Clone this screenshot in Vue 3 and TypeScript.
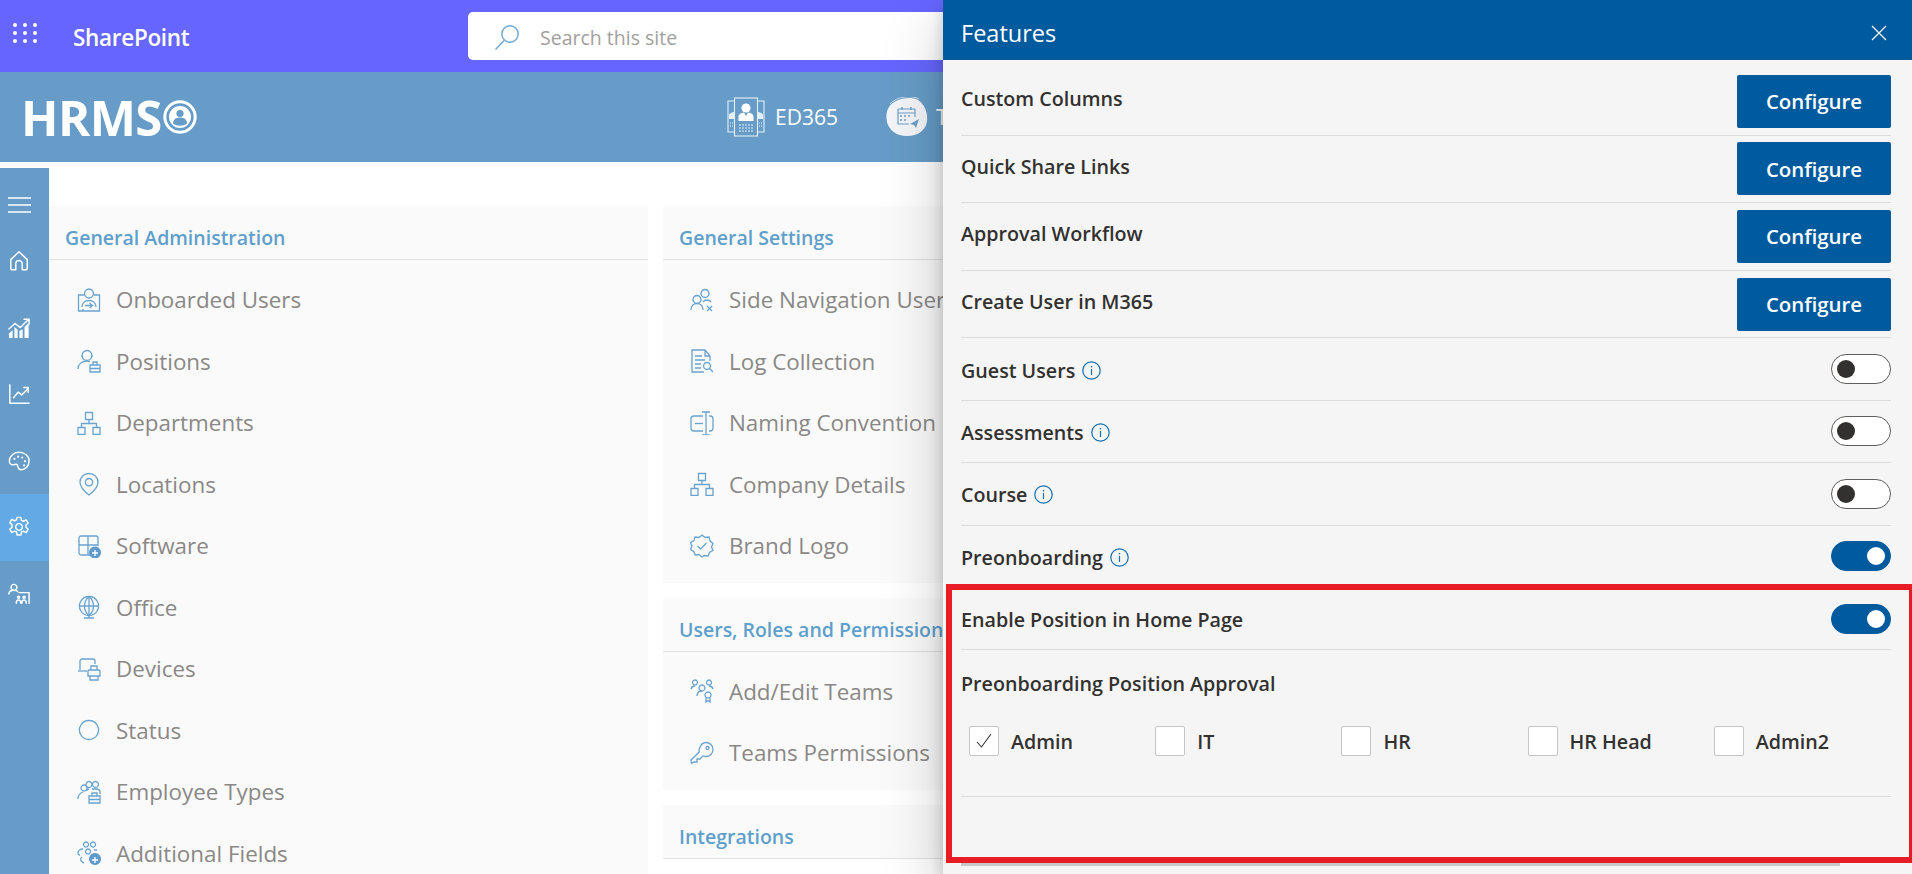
<template>
  <div class="page">
    <header class="topbar">
      <svg class="waffle" viewBox="0 0 24 20" width="24" height="20">
        <template v-for="y in [2, 10, 18]" :key="y">
          <circle v-for="x in [2, 12, 22]" :key="x" :cx="x" :cy="y" r="2" fill="#fff" />
        </template>
      </svg>
      <span class="product">SharePoint</span>
      <div class="search">
        <svg class="search-icon" viewBox="0 0 26 26" width="26" height="26" fill="none" stroke="#6ba6d8" stroke-width="1.4">
          <circle cx="16" cy="10" r="8.2" />
          <path d="M10 16.5 1.5 25.5" />
        </svg>
        <span>Search this site</span>
      </div>
    </header>

    <div class="brandbar">
      <div class="logo">
        <span class="logo-text">HRMS</span>
        <svg viewBox="0 0 34 34" width="34" height="34">
          <circle cx="17" cy="17" r="15.2" fill="none" stroke="#fff" stroke-width="3" />
          <circle cx="17" cy="17" r="11" fill="#fff" />
          <circle cx="17" cy="13.5" r="3.6" fill="#669cc7" />
          <path d="M10 23.5c0-4 3-6 7-6s7 2 7 6c-2 1.6-4.4 2.2-7 2.2s-5-.6-7-2.2z" fill="#669cc7" />
        </svg>
      </div>
      <div class="brand-link first">
        <svg viewBox="0 0 38 40" width="38" height="40" fill="none" stroke="#e4f0f8" stroke-width="1.1">
          <path d="M7 4H1v31h6M31 4h6v31h-6" />
          <rect x="7.5" y="1" width="23" height="38" />
          <circle cx="19" cy="11" r="4.6" fill="#fff" stroke="none" />
          <path d="M11.5 24v-4c0-3 3-3.8 5.5-4.4l2 3.4 2-3.4c2.5.6 5.5 1.4 5.5 4.4v4z" fill="#fff" stroke="none" />
          <path d="M2 22v-4c0-1.5 2-2.5 5-3v7zM36 22v-4c0-1.5-2-2.5-5-3v7z" fill="#e4f0f8" stroke="none" />
          <path d="M12 28h14M12 31h14M12 34h14" stroke-dasharray="2 1" />
          <path d="M3 26h3M3 29h3M32 26h3M32 29h3" stroke-dasharray="1 1" />
        </svg>
        <span>ED365</span>
      </div>
      <div class="brand-link second">
        <svg viewBox="0 0 44 40" width="44" height="40">
          <path d="M4 10C10 1 26-1 33 3c6 4 10 12 9 21-1 9-9 15-20 15C11 39 4 33 2 25 1 19 1 15 4 10z" fill="#f3f5f8" />
          <path d="M5 7C12-1 27-2 34 2" fill="none" stroke="#dfe8f0" stroke-width=".8" />
          <path d="M13 12h17v8M13 12v15h11M13 16h17" fill="none" stroke="#6d9fc9" stroke-width="1.2" />
          <path d="M17 10v3M26 10v3M15 19h2M19 19h2M23 19h2M15 23h2M19 23h2" stroke="#6d9fc9" stroke-width="1.4" fill="none" />
          <path d="M25 27l9-5-3 9-2-3z" fill="#6d9fc9" />
        </svg>
        <span>Travel</span>
      </div>
    </div>

    <div class="main">
      <nav class="rail">
        <svg class="hamburger" viewBox="0 0 23 16" width="23" height="16" stroke="#fff" stroke-width="1.5">
          <path d="M0 1h23M0 8h23M0 15h23" />
        </svg>
        <div v-for="item in railItems" :key="item.name" class="rail-item" :class="{ active: item.active }">
          <svg viewBox="0 0 24 24" width="22" height="22" fill="none" stroke="#fff" stroke-width="1.6" stroke-linecap="round" stroke-linejoin="round">
            <path v-for="d in item.lines" :key="d" :d="d" />
            <path v-for="d in item.fills ?? []" :key="d" :d="d" fill="#fff" stroke="none" />
          </svg>
        </div>
      </nav>

      <div class="content">
        <div class="column">
          <section class="card">
            <h3>General Administration</h3>
            <ul>
              <li v-for="item in generalAdmin" :key="item.label">
                <svg viewBox="0 0 24 24" width="24" height="24" fill="none" stroke="#69a3d0" stroke-width="1.3">
                  <path v-for="d in item.lines" :key="d" :d="d" />
                  <path v-for="d in item.fills ?? []" :key="d" :d="d" fill="#5e9bcb" stroke="none" />
                  <path v-if="item.plus" d="M18 16v6M15 19h6" stroke="#fff" />
                </svg>
                <span>{{ item.label }}</span>
              </li>
            </ul>
          </section>
        </div>
        <div class="column second-col">
          <section v-for="card in rightCards" :key="card.title" class="card">
            <h3>{{ card.title }}</h3>
            <ul v-if="card.items.length">
              <li v-for="item in card.items" :key="item.label">
                <svg viewBox="0 0 24 24" width="24" height="24" fill="none" stroke="#69a3d0" stroke-width="1.3">
                  <path v-for="d in item.lines" :key="d" :d="d" />
                </svg>
                <span>{{ item.label }}</span>
              </li>
            </ul>
          </section>
        </div>
      </div>
    </div>

    <aside class="panel">
      <div class="panel-head">
        <span>Features</span>
        <svg viewBox="0 0 16 16" width="16" height="16" stroke="#fff" stroke-width="1.2">
          <path d="M1 1l14 14M15 1L1 15" />
        </svg>
      </div>
      <div class="panel-body">
        <div v-for="name in configRows" :key="name" class="row config-row">
          <span class="label">{{ name }}</span>
          <button class="configure">Configure</button>
        </div>
        <div v-for="row in toggleRows" :key="row.name" class="row toggle-row">
          <span class="label">
            {{ row.name }}
            <svg v-if="row.info" class="info" viewBox="0 0 19 19" width="19" height="19" fill="none" stroke="#0f6cb0" stroke-width="1.2">
              <circle cx="9.5" cy="9.5" r="8.7" />
              <path d="M9.5 8v6" />
              <path d="M9.5 5v1.4" stroke-width="1.4" />
            </svg>
          </span>
          <div class="toggle" :class="{ on: row.on }"><i></i></div>
        </div>
        <div class="approval">
          <div class="label approval-title">Preonboarding Position Approval</div>
          <div class="checks">
            <div v-for="check in approvals" :key="check.name" class="check">
              <div class="box">
                <svg v-if="check.checked" viewBox="0 0 18 18" width="18" height="18" fill="none" stroke="#323130" stroke-width="1.1">
                  <path d="M2 10l4.5 5L16 2" />
                </svg>
              </div>
              <span class="label">{{ check.name }}</span>
            </div>
          </div>
        </div>
      </div>
      <div class="thumb"></div>
      <div class="highlight"></div>
    </aside>
  </div>
</template>

<script setup lang="ts">
interface IconItem {
  label: string
  lines: string[]
  fills?: string[]
  plus?: boolean
}

interface RailItem {
  name: string
  lines: string[]
  fills?: string[]
  active?: boolean
}

const treeIcon = [
  'M8.5 1.5h7v7h-7zM1 16.5h7v7H1zM16 16.5h7v7h-7z',
  'M12 8.5v4M4.5 16.5v-4h15v4',
]

const railItems: RailItem[] = [
  { name: 'home', lines: ['M3 10.5 12 2l9 8.5v9a2 2 0 0 1-2 2h-3.5V15a3.5 3.5 0 0 0-7 0v6.5H5a2 2 0 0 1-2-2z'] },
  {
    name: 'reports',
    lines: ['M1 13l6.5-6 6 4.5L22 3M17.5 2.5H23V8'],
    fills: ['M1 23v-5l4-3.5V23zM7 23V11l3.5 2.5V23zM12.5 23v-8l3.5-1.5V23zM18 23V11l4.5-4.5V23z'],
  },
  { name: 'analytics', lines: ['M2 2v20h21', 'M6 16l5-6 4 3 7-7', 'M17 5h5v5'] },
  {
    name: 'theme',
    lines: ['M12 2.5C6 2.5 1.5 7 1.5 12c0 3 2 4.5 4 4 3-.8 4.5-1 5 1 .5 2 .5 4.5 3.5 4.5 5 0 9-4 9-9.5S18 2.5 12 2.5z'],
    fills: ['M7 8.5a1.2 1.2 0 1 0 .1 0zM11 6a1.2 1.2 0 1 0 .1 0zM15.5 7a1.2 1.2 0 1 0 .1 0zM18.5 11a1.2 1.2 0 1 0 .1 0zM17.5 15.5a1.2 1.2 0 1 0 .1 0z'],
  },
  {
    name: 'settings',
    active: true,
    lines: [
      'M10 1.5h4l.7 3.2 2.2 1 2.9-1.5 2.2 3.5-2.4 2.2v2.4l2.4 2.2-2.2 3.5-2.9-1.5-2.2 1-.7 3.2h-4l-.7-3.2-2.2-1-2.9 1.5-2.2-3.5 2.4-2.2V9.4L1.9 7.2l2.2-3.5L7 5.2l2.2-1z',
      'M12 8.3a3.7 3.7 0 1 0 .01 0z',
    ],
  },
  {
    name: 'people',
    lines: [
      'M6.5 1.5a3.2 3.2 0 1 0 .01 0zM1 12c0-2.5 2.5-4 5.5-4 1.5 0 3 .4 4 1.2',
      'M12 10.5h11M23 10.5V22',
      'M9 22c0-2.5 1-3.5 2.5-3.5s2.5 1 2.5 3.5M15 22c0-2.5 1-3.5 2.5-3.5S20 19.500 20 22',
    ],
    fills: ['M11.5 13.5a2 2 0 1 1 0 4 2 2 0 1 1 0-4zM17.5 13.5a2 2 0 1 1 0 4 2 2 0 1 1 0-4z'],
  },
]

const generalAdmin: IconItem[] = [
  {
    label: 'Onboarded Users',
    lines: [
      'M7 7H1.5v16h21V7H17',
      'M12 1a4.5 4.5 0 1 0 .01 0z',
      'M5 19c0-4 3-6.5 7-6.5s7 2.5 7 6.5',
      'M8 17.5h7M12.5 15l3 2.5-3 2.5M6 23v-2',
    ],
  },
  {
    label: 'Positions',
    lines: ['M10 1.5a5 5 0 1 0 .01 0z', 'M1 20c0-5 4-8 9-8 1 0 2 .1 3 .4', 'M13 16h10v7H13zM16 16v-3h4v3M13 19.5h10'],
  },
  { label: 'Departments', lines: treeIcon },
  {
    label: 'Locations',
    lines: ['M12 1.5c5 0 9 3.8 9 8.7 0 5-4 8.8-9 12.8-5-4-9-7.8-9-12.8 0-4.9 4-8.7 9-8.7z', 'M12 6.5a3.7 3.7 0 1 0 .01 0z'],
  },
  {
    label: 'Software',
    lines: ['M13 21H4a2 2 0 0 1-2-2V4a2 2 0 0 1 2-2h15a2 2 0 0 1 2 2v8', 'M2 11h19M11 2v19'],
    fills: ['M18 12.5a6 6 0 1 0 .01 0z'],
    plus: true,
  },
  {
    label: 'Office',
    lines: [
      'M12 1.5a9.5 9.5 0 1 0 .01 0z',
      'M12 1.5c-6 5-6 14 0 19 6-5 6-14 0-19z',
      'M2 11h20M12 1v22M7 23h10',
    ],
  },
  {
    label: 'Devices',
    lines: [
      'M3 13V4a2 2 0 0 1 2-2h11a2 2 0 0 1 2 2v3',
      'M1 14h9',
      'M12 13h10a1 1 0 0 1 1 1v5H11v-5a1 1 0 0 1 1-1zM14 13V9h6v4M13 19v4h8v-4',
    ],
  },
  { label: 'Status', lines: ['M12 2.5a9.5 9.5 0 1 0 .01 0z'] },
  {
    label: 'Employee Types',
    lines: [
      'M7 5a3 3 0 1 0 .01 0zM12 1.5a3 3 0 1 0 .01 0zM18.5 1.5a3 3 0 1 0 .01 0z',
      'M1 19c0-4 2.5-6 5-7M9 11c1-1.5 2-2 3-2M15 9h4c2 0 4 1 4 3v2',
      'M12 16h11v7H12zM15 16v-3h5v3M12 19.5h11',
    ],
  },
  {
    label: 'Additional Fields',
    lines: [
      'M9 1a2.5 2.5 0 1 0 .01 0zM16 1a2.5 2.5 0 1 0 .01 0zM11 8a2.5 2.5 0 1 0 .01 0z',
      'M6 8c-3 0-5 2-5 4 0 1 1 2 2 2M5 16c-2 1-2 5 2 6M17 9h3',
    ],
    fills: ['M18 12a6 6 0 1 0 .01 0z'],
    plus: true,
  },
]

const rightCards: { title: string; items: IconItem[] }[] = [
  {
    title: 'General Settings',
    items: [
      {
        label: 'Side Navigation Users',
        lines: [
          'M15 1.5a4 4 0 1 0 .01 0zM7 7.5a4 4 0 1 0 .01 0z',
          'M1 22c0-4 2.5-6.5 6-6.5s6 2.5 6 6.5M13 14c1-1.5 2-2 4-2 1.5 0 3 .6 4 2',
          'M17 18l5 5M22 18l-5 5',
        ],
      },
      {
        label: 'Log Collection',
        lines: [
          'M14 23H2V1h13l5 6v5M15 1v6h5',
          'M5 7h7M5 11h10M5 15h6M5 19h6',
          'M17 13.5a3.5 3.5 0 1 0 .01 0zM19.5 19.5l3.5 3.5',
        ],
      },
      {
        label: 'Naming Convention',
        lines: [
          'M13 5H4a3 3 0 0 0-3 3v9a3 3 0 0 0 3 3h9M19 5h1a3 3 0 0 1 3 3v9a3 3 0 0 1-3 3h-1',
          'M12 1h8M12 24h8M16 1v23',
          'M5 12.5h8',
        ],
      },
      { label: 'Company Details', lines: treeIcon },
      {
        label: 'Brand Logo',
        lines: [
          'M12 1l3 2.5 4-.5 1 3.8 3 2.7-1.5 3.5 1.5 3.5-3.5 2-1.500 3.500-3.800-.5L12 23l-3-2.500-3.800.5-1.500-3.500L.5 15.500 2 12 .5 8.500l3.500-2L5 3l4 .5z',
          'M7.5 12l3 3 6-6',
        ],
      },
    ],
  },
  {
    title: 'Users, Roles and Permissions',
    items: [
      {
        label: 'Add/Edit Teams',
        lines: [
          'M5 1a2.5 2.5 0 1 0 .01 0zM19 1a2.5 2.5 0 1 0 .01 0zM12 6a3 3 0 1 0 .01 0z',
          'M1 10c.5-2 2-3 4-3M23 10c-.5-2-2-3-4-3M7 17c0-3 2-5 5-5',
          'M18 13a3 3 0 1 0 .01 0zM16 18.5V23l2-1.5 2 1.5v-4.5',
        ],
      },
      {
        label: 'Teams Permissions',
        lines: [
          'M16 1.5a7 7 0 0 1 0 14c-1 0-2-.2-3-.6L10 18H7v3H4l-2.5 1.500L1 19l8.200-8c-.2-1-.2-2.500.3-3.500 1-3.500 3.500-6 6.500-6z',
          'M17.5 5.5a1.5 1.5 0 1 0 .01 0z',
        ],
      },
    ],
  },
  { title: 'Integrations', items: [] },
]

const configRows = ['Custom Columns', 'Quick Share Links', 'Approval Workflow', 'Create User in M365']

const toggleRows = [
  { name: 'Guest Users', info: true, on: false },
  { name: 'Assessments', info: true, on: false },
  { name: 'Course', info: true, on: false },
  { name: 'Preonboarding', info: true, on: true },
  { name: 'Enable Position in Home Page', info: false, on: true },
]

const approvals = [
  { name: 'Admin', checked: true },
  { name: 'IT', checked: false },
  { name: 'HR', checked: false },
  { name: 'HR Head', checked: false },
  { name: 'Admin2', checked: false },
]
</script>

<style scoped>
.page {
  position: relative;
  width: 1912px;
  height: 874px;
  overflow: hidden;
  background: #fff;
  font-family: "Open Sans", "Noto Sans", sans-serif;
}

.topbar {
  display: flex;
  align-items: center;
  height: 72px;
  background: #6666ff;
  color: #fff;
}

.waffle {
  margin-left: 13px;
  margin-top: -6px;
}

.product {
  width: 117px;
  margin-left: 36px;
  padding-top: 2px;
  font-size: 22.5px;
  font-weight: 600;
  letter-spacing: -0.3px;
}

.search {
  display: flex;
  align-items: center;
  width: 600px;
  height: 48px;
  margin-left: 278px;
  border-radius: 5px;
  background: #fff;
  color: #a19f9d;
  font-size: 19.5px;
}

.search-icon {
  margin: 2px 20px 0 26px;
}

.search span {
  padding-top: 2px;
}

.brandbar {
  display: flex;
  align-items: center;
  height: 90px;
  background: #669cc7;
  color: #fff;
}

.logo {
  display: flex;
  align-items: center;
  gap: 1px;
  width: 175px;
  margin-left: 21px;
}

.logo svg {
  flex: none;
}

.logo-text {
  font-size: 49px;
  font-weight: 700;
  line-height: 1;
  letter-spacing: -0.6px;
}

.brand-link {
  display: flex;
  align-items: center;
  gap: 10px;
  font-size: 21px;
}

.brand-link.first {
  margin-left: 531px;
}

.brand-link.second {
  margin-left: 47px;
  gap: 7px;
}

.main {
  display: flex;
  margin-top: 6px;
  height: 706px;
}

.rail {
  display: flex;
  flex-direction: column;
  flex: 0 0 49px;
  background: #669cc7;
}

.hamburger {
  margin: 29px 0 15px 8px;
}

.rail-item {
  display: flex;
  align-items: center;
  height: 66.5px;
  padding-left: 8px;
}

.rail-item.active {
  background: #63a9e6;
}

.content {
  display: flex;
  gap: 15px;
  margin-top: 38px;
}

.column {
  display: flex;
  flex-direction: column;
  gap: 15px;
  width: 599px;
}

.card {
  background: #fafafa;
  flex: none;
}

.card h3 {
  display: flex;
  align-items: center;
  height: 54px;
  margin: 0;
  padding: 10px 0 0 16px;
  box-sizing: border-box;
  border-bottom: 1px solid #e1e1e1;
  color: #5f9fcc;
  font-size: 19.5px;
  font-weight: 600;
  white-space: nowrap;
}

.card ul {
  margin: 0;
  padding: 9px 0 6px;
  list-style: none;
}

.card li {
  display: flex;
  align-items: center;
  gap: 15px;
  height: 61.5px;
  padding-left: 28px;
  color: #8a8886;
  font-size: 22.4px;
  white-space: nowrap;
}

.second-col li {
  padding-left: 27px;
}

.panel {
  position: absolute;
  top: 0;
  right: 0;
  bottom: 0;
  width: 969px;
  background: #f5f5f5;
  box-shadow: rgba(0, 0, 0, 0.22) 0 25.6px 57.6px, rgba(0, 0, 0, 0.18) 0 4.8px 14.4px;
  color: #323130;
}

.panel-head {
  display: flex;
  align-items: center;
  justify-content: space-between;
  height: 60px;
  padding: 5px 25px 0 18px;
  box-sizing: border-box;
  background: #005a9e;
  color: #fff;
  font-size: 23.5px;
}

.panel-body {
  padding: 8px 21px 0 18px;
}

.row {
  display: flex;
  align-items: center;
  justify-content: space-between;
  box-sizing: border-box;
  border-bottom: 1px solid #dcdcdc;
}

.config-row {
  height: 67.6px;
}

.config-row .label {
  margin-top: -5px;
}

.toggle-row {
  height: 62.4px;
}

.toggle-row .label {
  margin-top: 2px;
}

.label {
  display: inline-flex;
  align-items: center;
  font-size: 19.7px;
  font-weight: 600;
  white-space: nowrap;
}

.info {
  margin-left: 7px;
}

.configure {
  width: 154px;
  height: 53px;
  border: none;
  border-radius: 2px;
  background: #005a9e;
  color: #fff;
  font-family: inherit;
  font-size: 20.4px;
  font-weight: 600;
}

.toggle {
  display: flex;
  align-items: center;
  box-sizing: border-box;
  width: 60px;
  height: 30px;
  padding: 0 5px;
  border: 1px solid #605e5c;
  border-radius: 15px;
  background: #fff;
}

.toggle i {
  width: 18px;
  height: 18px;
  border-radius: 50%;
  background: #323130;
}

.toggle.on {
  justify-content: flex-end;
  border-color: #005a9e;
  background: #005a9e;
}

.toggle.on i {
  background: #fff;
}

.approval {
  height: 147px;
  box-sizing: border-box;
  border-bottom: 1px solid #dcdcdc;
}

.approval-title {
  display: flex;
  height: 66px;
  padding-bottom: 10px;
}

.checks {
  display: grid;
  grid-template-columns: repeat(5, 186.2px);
  padding-left: 8px;
}

.check {
  display: flex;
  align-items: center;
  gap: 12px;
}

.box {
  display: flex;
  align-items: center;
  justify-content: center;
  box-sizing: border-box;
  width: 30px;
  height: 30px;
  border: 1px solid #c8c6c4;
  border-radius: 2px;
  background: #fff;
}

.thumb {
  position: absolute;
  left: 18px;
  bottom: 8px;
  width: 879px;
  height: 3px;
  background: #c8c8c8;
}

.highlight {
  position: absolute;
  top: 584px;
  left: 3px;
  right: -3px;
  height: 279px;
  box-sizing: border-box;
  border: 6px solid #e81c24;
}
</style>

<style>
html,
body {
  margin: 0;
  overflow: hidden;
}
</style>
